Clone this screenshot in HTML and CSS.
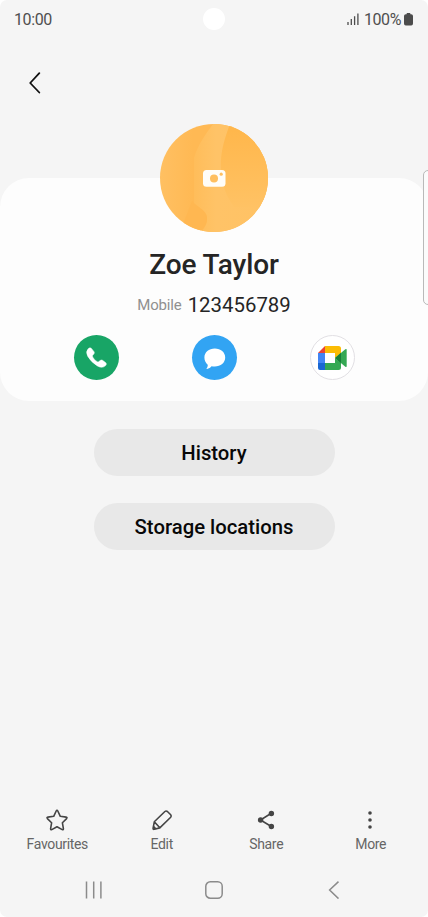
FILE: index.html
```html
<!DOCTYPE html>
<html lang="en">
<head>
    <meta charset="UTF-8">
    <meta name="viewport" content="width=device-width, initial-scale=1.0">
    <title>Zoe Taylor</title>
    <link rel="stylesheet" href="styles.css">
</head>
<body>
    <div class="phone">
        <header class="status-bar">
            <span class="time">10:00</span>
            <span class="camera-hole"></span>
            <div class="status-right">
                <svg class="signal" width="12" height="12" viewBox="0 0 12 12">
                    <path d="M1 9v3M4.3 6v6M7.6 3.2v8.8M10.9 0.5v11.5" stroke="#4c4c4c" stroke-width="1.3"/>
                </svg>
                <span class="percent">100%</span>
                <svg class="battery" width="9" height="13" viewBox="0 0 9 13">
                    <path d="M2.6 1.2V.7Q2.6 0 3.3 0h2.4q.7 0 .7.7v.5h.8Q9 1.2 9 3v7.6q0 1.9-1.8 1.9H1.8Q0 12.5 0 10.6V3q0-1.8 1.8-1.8z" fill="#4c4c4c"/>
                </svg>
            </div>
        </header>

        <div class="top-bar">
            <svg width="14" height="22" viewBox="0 0 14 22">
                <path d="M11.3 1.2 2.2 11l9.1 9.5" fill="none" stroke="#111" stroke-width="1.8" stroke-linecap="round" stroke-linejoin="round"/>
            </svg>
        </div>

        <section class="card">
            <svg class="avatar" width="108" height="108" viewBox="0 0 108 108">
                <defs>
                    <clipPath id="round"><circle cx="54" cy="54" r="54"/></clipPath>
                    <linearGradient id="base" x1="0" y1="0" x2="1" y2="0">
                        <stop offset="0" stop-color="#ffc062"/>
                        <stop offset=".3" stop-color="#ffb954"/>
                        <stop offset=".5" stop-color="#ffb954"/>
                        <stop offset="1" stop-color="#ffc160"/>
                    </linearGradient>
                    <linearGradient id="leaf" x1="0" y1="0" x2="0" y2="1">
                        <stop offset="0" stop-color="#ffb64a"/>
                        <stop offset="1" stop-color="#ffc264"/>
                    </linearGradient>
                    <linearGradient id="ribbon" x1="0" y1="0" x2="1" y2="0">
                        <stop offset="0" stop-color="#ffbd5a"/>
                        <stop offset=".3" stop-color="#ffc367"/>
                        <stop offset="1" stop-color="#ffc264"/>
                    </linearGradient>
                </defs>
                <g clip-path="url(#round)">
                    <path d="M0 0h108v108H0z" fill="url(#base)"/>
                    <path d="M53 0C46 10 38 20 34 34v46c5 6 13 8 13 15 0 6-3 9-6 13h67V0z" fill="url(#ribbon)"/>
                    <path d="M70 0C64 16 60 30 61 45c1 17 5 26 13 38h34V0z" fill="url(#leaf)"/>
                    <path d="M32 77c6 7 15 9 15 17 0 6-3 10-7 14H20z" fill="#ffb751"/>
                </g>
                <path d="M46.5 46H62q3.5 0 3.5 3.5v9.8q0 3.5-3.5 3.5H46.5q-3.5 0-3.5-3.5v-9.8q0-3.5 3.5-3.5z" fill="#fffdf8"/>
                <circle cx="54" cy="54.5" r="4" fill="#ffbf5f"/>
                <circle cx="61.2" cy="50.2" r="1.6" fill="#ffbf5f"/>
            </svg>
            <h1 class="name">Zoe Taylor</h1>
            <div class="phone-line">
                <span class="phone-type">Mobile</span>
                <span class="phone-number">123456789</span>
            </div>
            <div class="actions">
                <span class="action call">
                    <svg width="45" height="45" viewBox="0 0 45 45">
                        <path d="M14.2 13.8Q16 12 17.4 13.4L20 16.7q.9 1.4-.4 2.6-1.7 1.2-1 2.6 1.6 3 4.6 4.8 1.4.7 2.6-.9 1.2-1.4 2.7-.5l3.3 2.5q1.4 1.2-.2 2.8-3.4 3.2-8.2.3-6.4-3.9-9.7-9.7-2.4-4.6.5-7.4z" fill="#fff" stroke="#fff" stroke-width=".5"/>
                    </svg>
                </span>
                <span class="action message">
                    <svg width="45" height="45" viewBox="0 0 45 45">
                        <path d="M22.8 13.6c5.9 0 10.4 3.8 10.4 9s-4.5 9-10.4 9c-1.2 0-2.3-.1-3.3-.4-1 1.4-2.6 2.4-4.5 2.7-.5 0-.6-.4-.3-.7.8-.9 1.2-2.2 1-3.4-2-1.700-3.300-4.200-3.300-7.200 0-5.200 4.500-9 10.400-9z" fill="#fff"/>
                    </svg>
                </span>
                <span class="action meet">
                    <svg width="29" height="24" viewBox="0 0 29 24">
                        <path d="M0 7 7 0v7z" fill="#ea4335"/>
                        <path d="M0 7h7v10H0z" fill="#4285f4"/>
                        <path d="M0 17h7v7H2q-2 0-2-2z" fill="#1967d2"/>
                        <path d="M7 0h13.5Q23 0 23 2.5V7l-6 5V7H7z" fill="#fbbc04"/>
                        <path d="M7 17h10v-5l6 5v4.5q0 2.5-2.5 2.5H7z" fill="#34a853"/>
                        <path d="m17 12 10.3-8.7q1.4-.9 1.4.6v16.2q0 1.5-1.4.6z" fill="#34a853"/>
                        <path d="m17 12 6-5.2v10.4z" fill="#188038"/>
                    </svg>
                </span>
            </div>
        </section>

        <div class="buttons">
            <button class="pill">History</button>
            <button class="pill">Storage locations</button>
        </div>

        <nav class="toolbar">
            <div class="tool">
                <svg width="24" height="24" viewBox="0 0 24 24">
                    <path d="M12 2.4q.5 0 .8.6l2.5 5.3 5.8.8q1.5.3.5 1.5l-4.2 4.2 1 5.8q.1 1.5-1.2 1L12 18.8l-5.2 2.8q-1.3.5-1.2-1l1-5.8-4.2-4.2q-1-1.2.5-1.5l5.8-.8L11.2 3q.3-.6.8-.6z" fill="none" stroke="#454545" stroke-width="1.6" stroke-linejoin="round"/>
                </svg>
                <span>Favourites</span>
            </div>
            <div class="tool">
                <svg width="24" height="24" viewBox="0 0 24 24">
                    <path d="M3.1 20.2 4.3 13.8 14.9 3.5q1.2-1 2.5 0l3.3 3.3q1 1.3 0 2.5L9.8 19.9l-5.6 1.4q-1.3.2-1.1-1.1zM4.3 13.8l5.5 6" fill="none" stroke="#454545" stroke-width="1.6" stroke-linejoin="round"/>
                    <path d="M3.5 17.3 7 21l-3.8.6z" fill="#454545"/>
                </svg>
                <span>Edit</span>
            </div>
            <div class="tool">
                <svg width="24" height="24" viewBox="0 0 24 24">
                    <path d="M17.3 5.2 6.5 12l10.8 6.5" fill="none" stroke="#454545" stroke-width="1.6"/>
                    <g fill="#454545"><circle cx="17.4" cy="5.5" r="2.7"/><circle cx="6.6" cy="12" r="2.7"/><circle cx="17.4" cy="18.5" r="2.7"/></g>
                </svg>
                <span>Share</span>
            </div>
            <div class="tool">
                <svg width="24" height="24" viewBox="0 0 24 24">
                    <g fill="#454545"><circle cx="11" cy="5" r="1.8"/><circle cx="11" cy="12" r="1.8"/><circle cx="11" cy="19" r="1.8"/></g>
                </svg>
                <span>More</span>
            </div>
        </nav>

        <footer class="nav-bar">
            <svg width="18" height="18" viewBox="0 0 18 18">
                <path d="M1.5.5v17M8.7.5v17M15.9.5v17" stroke="#8b8b8b" stroke-width="1.5"/>
            </svg>
            <svg width="18" height="18" viewBox="0 0 18 18">
                <rect x=".8" y=".8" width="16.4" height="16.4" rx="4.5" fill="none" stroke="#8b8b8b" stroke-width="1.5"/>
            </svg>
            <svg width="18" height="18" viewBox="0 0 18 18">
                <path d="M13.5.6 4.6 9l8.9 8.6" fill="none" stroke="#8b8b8b" stroke-width="1.5"/>
            </svg>
        </footer>

        <!-- edge panel handle -->
        <div class="edge-handle"></div>
    </div>
</body>
</html>
```

FILE: styles.css
```css
* {
    box-sizing: border-box;
}

body {
    margin: 0;
    background-color: #fff;
    font-family: Roboto, "Liberation Sans", sans-serif;
}

svg {
    display: block;
}

.phone {
    position: relative;
    display: flex;
    flex-direction: column;
    width: 428px;
    height: 917px;
    overflow: hidden;
    background-color: #f5f5f5;
    border-radius: 7px;
}

.status-bar {
    display: grid;
    grid-template-columns: 1fr 22px 1fr;
    align-items: center;
    height: 38px;
    padding: 0 15px 0 14px;
    color: #4f4f4f;
    font-size: 16px;
    line-height: 18px;
    letter-spacing: -0.4px;
}

.time,
.percent {
    padding-top: 2px;
}

.camera-hole {
    width: 22px;
    height: 22px;
    border-radius: 50%;
    background-color: #fff;
}

.status-right {
    display: flex;
    justify-content: flex-end;
    align-items: center;
}

.percent {
    margin: 0 3px 0 5px;
}

.top-bar {
    height: 140px;
    padding: 34px 0 0 28px;
}

.card {
    display: flex;
    flex-direction: column;
    align-items: center;
    height: 223px;
    background-color: #fdfdfd;
    border-radius: 29px;
}

.avatar {
    flex-shrink: 0;
    margin-top: -54px;
}

.name {
    margin: 16px 0 0;
    color: #252525;
    font-size: 28px;
    font-weight: 500;
    line-height: 34px;
    letter-spacing: -0.1px;
}

.phone-line {
    display: flex;
    align-items: center;
    gap: 6px;
    margin-top: 11px;
    line-height: 24px;
}

.phone-type {
    color: #909090;
    font-size: 15px;
    letter-spacing: -0.15px;
}

.phone-number {
    color: #252525;
    font-size: 20.4px;
}

.actions {
    display: flex;
    justify-content: space-between;
    width: 281px;
    margin-top: 18px;
}

.action {
    display: flex;
    justify-content: center;
    align-items: center;
    width: 45px;
    height: 45px;
    border-radius: 50%;
}

.call {
    background-color: #18a566;
}

.message {
    background-color: #32a4f3;
}

.meet {
    background-color: #fff;
    border: 1px solid #e2e0e4;
}

.buttons {
    display: flex;
    flex-direction: column;
    align-items: center;
    gap: 27px;
    margin-top: 28px;
}

.pill {
    width: 241px;
    height: 47px;
    padding: 0;
    border: 0;
    border-radius: 24px;
    background-color: #e8e8e8;
    color: #080808;
    font-family: inherit;
    font-size: 20.3px;
    font-weight: 500;
}

.toolbar {
    display: grid;
    grid-template-columns: repeat(4, 1fr);
    margin-top: auto;
    padding: 0 5px;
}

.tool {
    display: flex;
    flex-direction: column;
    align-items: center;
    gap: 4px;
    color: #666;
    font-size: 14px;
    line-height: 16px;
    letter-spacing: -0.35px;
}

.nav-bar {
    display: flex;
    justify-content: space-between;
    height: 65px;
    padding: 29px 85px 0;
}

.edge-handle {
    position: absolute;
    top: 170px;
    right: -7px;
    width: 12px;
    height: 135px;
    border: 1px solid #b9b9b9;
    border-radius: 5px;
    background-color: #fbfbfb;
}
```
